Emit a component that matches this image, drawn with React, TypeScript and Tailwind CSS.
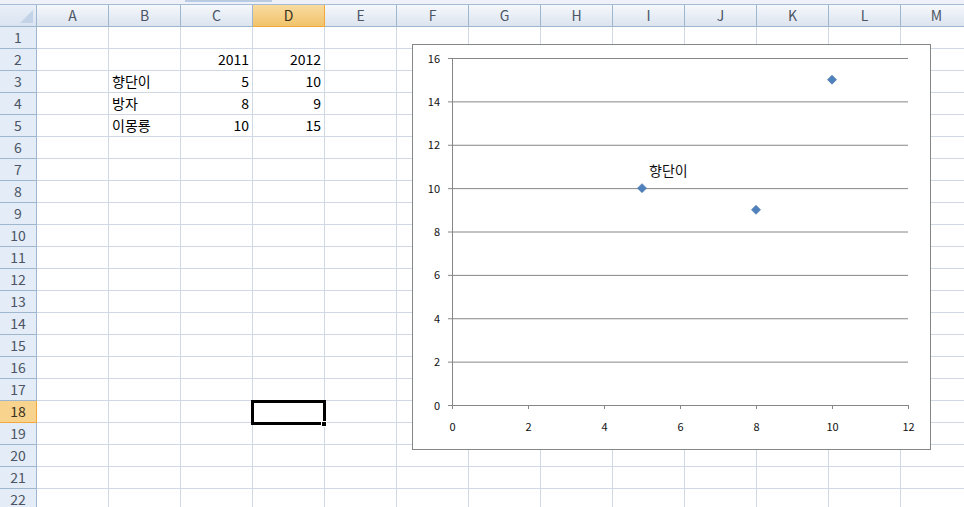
import React from 'react';

const COLS = ['A', 'B', 'C', 'D', 'E', 'F', 'G', 'H', 'I', 'J', 'K', 'L', 'M'];
const ROWS = Array.from({ length: 22 }, (_, i) => i + 1);

// cell values keyed by "row-col"
const cells: Record<string, { v: string; right?: boolean }> = {
  '2-C': { v: '2011', right: true },
  '2-D': { v: '2012', right: true },
  '3-B': { v: '향단이' },
  '3-C': { v: '5', right: true },
  '3-D': { v: '10', right: true },
  '4-B': { v: '방자' },
  '4-C': { v: '8', right: true },
  '4-D': { v: '9', right: true },
  '5-B': { v: '이몽룡' },
  '5-C': { v: '10', right: true },
  '5-D': { v: '15', right: true },
};

const font = { fontFamily: '"Noto Sans CJK KR", "Noto Sans", sans-serif' };

// chart geometry (relative to svg inside the chart border)
const X0 = 39;
const X1 = 495;
const Y0 = 360;
const Y1 = 13;
const sx = (v: number) => X0 + ((X1 - X0) * v) / 12;
const sy = (v: number) => Y0 - ((Y0 - Y1) * v) / 16;

const points = [
  { x: 5, y: 10 },
  { x: 8, y: 9 },
  { x: 10, y: 15 },
];

const Chart: React.FC = () => {
  const yTicks = [0, 2, 4, 6, 8, 10, 12, 14, 16];
  const xTicks = [0, 2, 4, 6, 8, 10, 12];
  return (
    <div className="absolute left-[412px] top-[44px] w-[519px] h-[406px] bg-white border border-[#868686]">
      <svg width="517" height="404" style={font}>
        {yTicks.map((t) => (
          <g key={t}>
            <line x1={X0 - 4} x2={X1} y1={sy(t) + 0.5} y2={sy(t) + 0.5} stroke="#868686" strokeWidth="1" />
            <text x={27} y={sy(t) + 4.5} fontSize="11" textAnchor="end" fill="#111">
              {t}
            </text>
          </g>
        ))}
        <line x1={X0 + 0.5} x2={X0 + 0.5} y1={Y1} y2={Y0 + 4} stroke="#868686" strokeWidth="1" />
        {xTicks.map((t) => (
          <g key={t}>
            <line x1={sx(t) + 0.5} x2={sx(t) + 0.5} y1={Y0} y2={Y0 + 4} stroke="#868686" strokeWidth="1" />
            <text x={sx(t) + 0.5} y={386} fontSize="11" textAnchor="middle" fill="#111">
              {t}
            </text>
          </g>
        ))}
        {points.map((p, i) => {
          const cx = sx(p.x);
          const cy = sy(p.y);
          return (
            <polygon
              key={i}
              points={`${cx},${cy - 4.5} ${cx + 4.5},${cy} ${cx},${cy + 4.5} ${cx - 4.5},${cy}`}
              fill="#4f81bd"
              stroke="#3d6a9f"
              strokeWidth="0.6"
            />
          );
        })}
        <text x={236} y={131} fontSize="14" fill="#111">
          향단이
        </text>
      </svg>
    </div>
  );
};

export default function App() {
  return (
    <div className="relative w-[964px] h-[507px] overflow-hidden bg-white" style={font}>
      {/* top strip (formula bar edge) */}
      <div className="relative h-[5px] bg-[#eef2f8] border-b border-[#a7bcd4]">
        <div className="absolute left-[185px] top-0 w-[87px] h-[2px] bg-[#b9cbe2]" />
      </div>

      {/* column header */}
      <div className="flex h-[22px]">
        <div className="w-[37px] shrink-0 border-r border-b border-[#9eb6ce] bg-gradient-to-b from-[#e9eff8] to-[#dae4f0] relative overflow-hidden">
          <div
            className="absolute right-[3px] bottom-[3px] w-[13px] h-[13px] bg-[#c2d3e8]"
            style={{ clipPath: 'polygon(100% 0, 100% 100%, 0 100%)' }}
          />
        </div>
        {COLS.map((c) => (
          <div
            key={c}
            className={`w-[72px] shrink-0 border-r border-b flex items-center justify-center text-[14px] ${
              c === 'D'
                ? 'bg-gradient-to-b from-[#f9dba0] to-[#f1c36a] border-[#f2a93b] text-[#3a3220]'
                : 'bg-gradient-to-b from-[#f5f8fc] to-[#dce4ef] border-[#9eb6ce] text-[#4b5565]'
            }`}
          >
            {c}
          </div>
        ))}
      </div>

      {/* rows */}
      {ROWS.map((r) => (
        <div key={r} className="flex h-[22px]">
          <div
            className={`w-[37px] shrink-0 border-r border-b flex items-center justify-center text-[14px] ${
              r === 18
                ? 'bg-[#f8d38e] border-[#f2a93b] text-[#3a3220]'
                : 'bg-[#e4ecf7] border-[#9eb6ce] text-[#4b5565]'
            }`}
          >
            {r}
          </div>
          {COLS.map((c) => {
            const cell = cells[`${r}-${c}`];
            return (
              <div
                key={c}
                className={`w-[72px] shrink-0 border-r border-b border-[#d0d7e5] flex items-center text-[14px] text-black px-[3px] ${
                  cell?.right ? 'justify-end' : 'justify-start'
                }`}
              >
                {cell?.v}
              </div>
            );
          })}
        </div>
      ))}

      {/* active cell D18 */}
      <div className="absolute left-[251px] top-[400px] w-[75px] h-[25px] border-[3px] border-black" />
      <div className="absolute left-[321px] top-[421px] w-[6px] h-[6px] bg-black border border-white" />

      <Chart />
    </div>
  );
}
